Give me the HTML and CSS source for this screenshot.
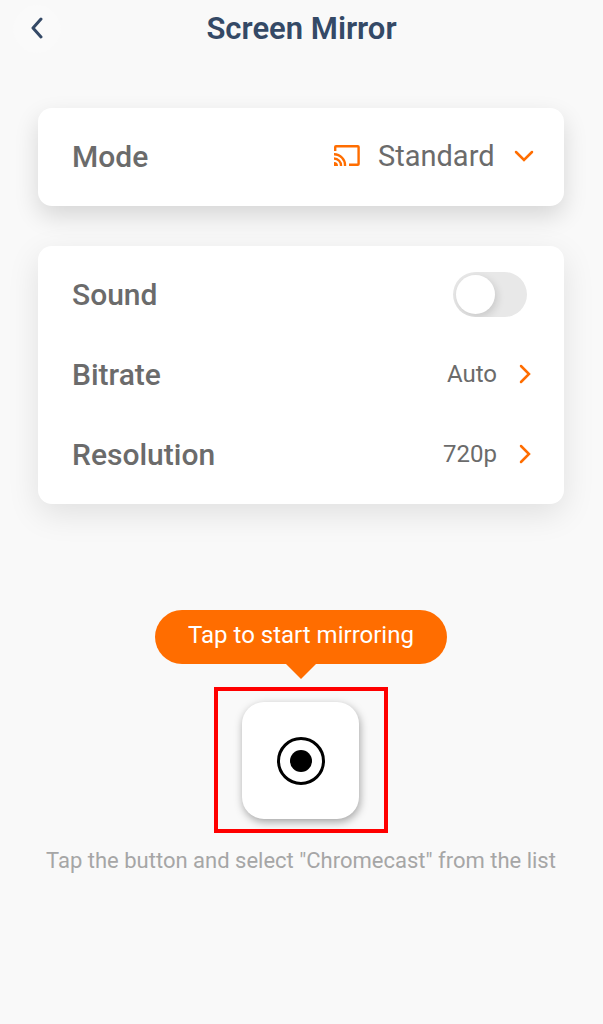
FILE: index.html
```
<!DOCTYPE html>
<html lang="en">
<head>
    <meta charset="UTF-8">
    <meta name="viewport" content="width=device-width, initial-scale=1">
    <title>Screen Mirror</title>
    <link rel="stylesheet" href="styles.css">
</head>
<body>

<header class="topbar">
    <button class="back" type="button" aria-label="Back">
        <svg width="16" height="24" viewBox="0 0 16 24"><path d="M12 2 4 11l8 9"/></svg>
    </button>
    <h1>Screen Mirror</h1>
</header>

<main>
    <section class="card card-mode">
        <div class="row">
            <label class="name" for="mode">Mode</label>
            <svg class="cast" width="26" height="22" viewBox="0 0 26 22">
                <path d="M1.200 6V2q0-.8.8-.8h21.800q.8 0 .8.8v17q0 .8-.8.8H15"/>
                <path d="M0 9.200a11 11 0 0 1 11 11.800M0 13.500a7 7 0 0 1 7 7.500"/>
                <path class="dot" d="M0 17a4 4 0 0 1 4 4H0z"/>
            </svg>
            <div class="select">
                <select id="mode">
                    <option>Standard</option>
                </select>
                <svg class="chevron" width="24" height="24" viewBox="0 0 24 24"><path d="m4 8 8 8 8-8"/></svg>
            </div>
        </div>
    </section>

    <section class="card">
        <div class="row">
            <label class="name" for="sound">Sound</label>
            <input class="switch" id="sound" type="checkbox" role="switch">
        </div>
        <div class="row">
            <span class="name" id="bitrate">Bitrate</span>
            <button class="value" type="button" aria-describedby="bitrate">
                Auto
                <svg class="chevron" width="24" height="24" viewBox="0 0 24 24"><path d="m9 4 8 8-8 8"/></svg>
            </button>
        </div>
        <div class="row">
            <span class="name" id="resolution">Resolution</span>
            <button class="value" type="button" aria-describedby="resolution">
                720p
                <svg class="chevron" width="24" height="24" viewBox="0 0 24 24"><path d="m9 4 8 8-8 8"/></svg>
            </button>
        </div>
    </section>

    <section class="start">
        <div class="bubble">Tap to start mirroring</div>
        <div class="frame">
            <button class="record" type="button" aria-label="Start mirroring">
                <svg width="48" height="48" viewBox="0 0 48 48">
                    <circle cx="24" cy="24" r="22.5" fill="none" stroke="#000" stroke-width="3"/>
                    <circle cx="24" cy="24" r="11"/>
                </svg>
            </button>
        </div>
        <p class="hint">Tap the button and select "Chromecast" from the list</p>
    </section>
</main>

</body>
</html>
```

FILE: styles.css
```
* {
    box-sizing: border-box;
}

body {
    margin: 0;
    background-color: #f9f9f9;
    color: #6b6b6b;
    font-family: Roboto, "Noto Sans", sans-serif;
}

button, select {
    padding: 0;
    border: none;
    background: none;
    color: inherit;
    font-family: inherit;
    cursor: pointer;
}

svg {
    display: block;
    flex: none;
}

/* Top bar */
.topbar {
    display: grid;
    grid-template-columns: 48px 1fr 48px;
    align-items: center;
    padding: 5px 13px 3px;
}

.back {
    display: flex;
    align-items: center;
    justify-content: center;
    width: 48px;
    height: 48px;
    border-radius: 50%;
    background-color: #fafafa;
}

.back path {
    fill: none;
    stroke: #344966;
    stroke-width: 3;
    stroke-linecap: round;
    stroke-linejoin: round;
}

h1 {
    margin: 0;
    color: #344966;
    font-size: 31px;
    line-height: 40px;
    font-weight: 600;
    text-align: center;
}

/* Setting cards */
main {
    padding: 52px 39px 40px 38px;
}

.card {
    margin-bottom: 40px;
    padding: 8px 28px 10px 34px;
    border-radius: 14px;
    background-color: #fff;
    box-shadow: 0 10px 32px rgba(0, 0, 0, .1);
}

.card-mode {
    box-shadow: 0 10px 24px rgba(0, 10, 10, .14);
}

.row {
    display: flex;
    align-items: center;
    height: 80px;
}

.name {
    flex: 1;
    font-size: 30px;
    font-weight: 500;
}

.cast {
    margin-right: 18px;
}

.cast path {
    fill: none;
    stroke: #ff6d00;
    stroke-width: 2.4;
}

.cast .dot {
    fill: #ff6d00;
    stroke: none;
}

.chevron path {
    fill: none;
    stroke: #ff6d00;
    stroke-width: 2.5;
    stroke-linecap: round;
}

.select {
    position: relative;
}

.select select {
    appearance: none;
    padding-right: 41px;
    font-size: 29px;
    line-height: 40px;
}

.select .chevron {
    position: absolute;
    top: 8px;
    right: 0;
    pointer-events: none;
}

.value {
    display: flex;
    align-items: center;
    gap: 15px;
    font-size: 24px;
    line-height: 40px;
}

/* Sound switch */
.switch {
    appearance: none;
    width: 74px;
    height: 45px;
    margin: 0 9px 0 0;
    padding: 3px;
    border-radius: 23px;
    background-color: #e8e8e8;
    overflow: hidden;
    cursor: pointer;
}

.switch::before {
    display: block;
    content: "";
    width: 39px;
    height: 39px;
    border-radius: 50%;
    background-color: #fff;
    box-shadow: 2px 3px 8px rgba(0, 0, 0, .14);
}

.switch:checked {
    background-color: #ff6d00;
}

.switch:checked::before {
    margin-left: 29px;
}

/* Start button */
.start {
    display: flex;
    flex-direction: column;
    align-items: center;
    padding-top: 66px;
}

.bubble {
    position: relative;
    padding: 5px 33px 9px;
    border-radius: 27px;
    background-color: #ff6d00;
    color: #fff;
    font-size: 24px;
    line-height: 40px;
}

.bubble::after {
    position: absolute;
    top: 100%;
    left: 50%;
    margin-left: -15px;
    border: 15px solid transparent;
    border-top-color: #ff6d00;
    border-bottom: none;
    content: "";
}

.frame {
    margin-top: 23px;
    padding: 11px 25px 10px 24px;
    border: 4px solid #f00;
}

.record {
    display: flex;
    align-items: center;
    justify-content: center;
    width: 117px;
    height: 117px;
    border-radius: 22px;
    background-color: #fff;
    box-shadow: 1px 3px 8px rgba(0, 0, 0, .35);
}

.hint {
    margin: 8px 0 0;
    color: #a6a6a6;
    font-size: 22px;
    line-height: 40px;
    text-align: center;
}
```
